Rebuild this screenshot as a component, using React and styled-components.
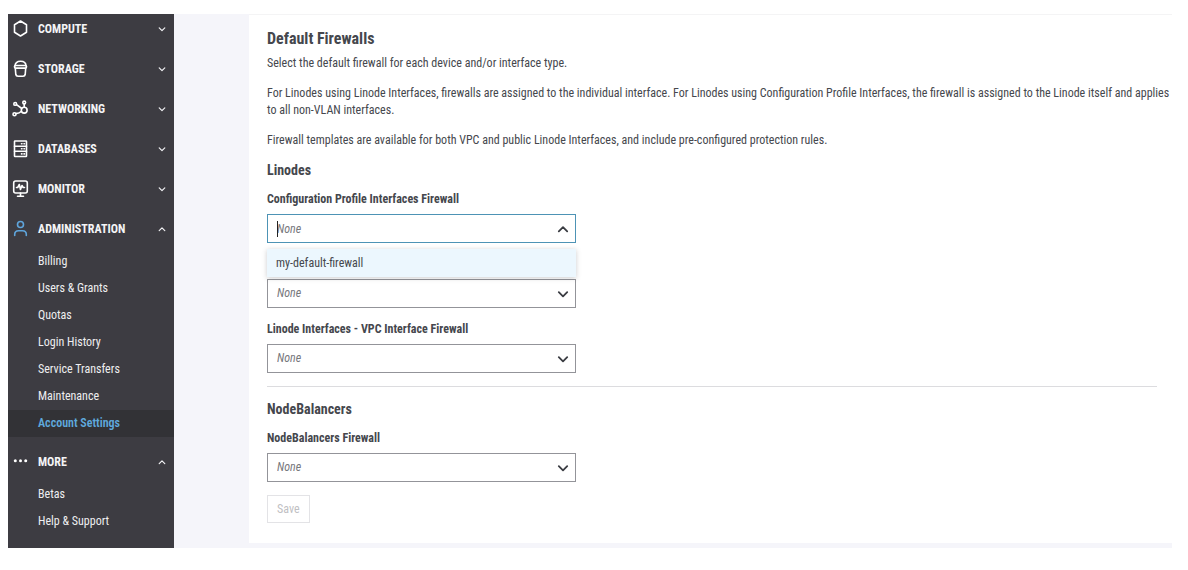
import React, { useState } from 'react';
import styled, { createGlobalStyle, css } from 'styled-components';

const GlobalStyle = createGlobalStyle`
  *, *::before, *::after { box-sizing: border-box; }
  body {
    margin: 0;
    background: #fff;
    color: #45474d;
    font: 12px/17px "Roboto Condensed", Roboto, sans-serif;
  }
  button, input, select { font: inherit; }
`;

const Page = styled.div`
  display: flex;
  padding: 14px 16px 22px 8px;
`;

const Sidebar = styled.nav`
  display: flex;
  flex-direction: column;
  gap: 10px;
  flex: 0 0 166px;
  padding-bottom: 12px;
  background: #3d3c42;
  color: #fff;
`;

const GroupHeader = styled.button`
  display: flex;
  align-items: center;
  gap: 9px;
  width: 100%;
  height: 30px;
  padding: 0 8px 0 4px;
  border: 0;
  background: none;
  color: #f4f4f6;
  font-weight: 700;
  text-align: left;
  text-transform: uppercase;
  cursor: pointer;
`;

const GroupIcon = styled.svg`
  flex: none;
  width: 17px;
  height: 18px;
  fill: none;
  stroke: ${(p) => (p.$active ? '#5fa5dc' : '#fff')};
  stroke-width: 1.6;
  stroke-linecap: round;
  stroke-linejoin: round;
`;

const GroupName = styled.span`
  flex: 1;
`;

const ChevronSvg = styled.svg`
  flex: none;
  width: ${(p) => p.$size}px;
  height: ${(p) => p.$size}px;
  fill: none;
  stroke: currentColor;
  stroke-width: 1.5;
  stroke-linecap: round;
  stroke-linejoin: round;
`;

const LinkList = styled.ul`
  margin: 4px 0 0;
  padding: 0;
  list-style: none;
`;

const NavLink = styled.a`
  display: block;
  padding-left: 30px;
  line-height: 27px;
  color: #eeeef0;
  text-decoration: none;
  ${(p) =>
    p.$current &&
    css`
      background: #323236;
      color: #5fa9dd;
      font-weight: 600;
    `}
`;

const Main = styled.main`
  flex: 1;
  min-width: 0;
  padding: 0 0 5px 75px;
  background: #f5f5fa;
`;

const Paper = styled.form`
  padding: 14px 15px 20px 18px;
  border-top: 1px solid #f4f4f5;
  background: #fff;
`;

const Title = styled.h1`
  margin: 0 0 6px;
  font-size: 16px;
  line-height: 20px;
`;

const Intro = styled.div`
  display: flex;
  flex-direction: column;
  gap: 13px;
  margin-bottom: 11px;

  @media (min-width: 1180px) {
    white-space: nowrap;
  }
`;

const Paragraph = styled.p`
  margin: 0;
`;

const SectionTitle = styled.h2`
  margin: 0 0 10px;
  font-size: 14px;
  line-height: 20px;
`;

const FieldStack = styled.div`
  display: flex;
  flex-direction: column;
  gap: 12px;
  max-width: 309px;
`;

const Field = styled.div`
  position: relative;
`;

const FieldLabel = styled.label`
  display: block;
  margin-bottom: 6px;
  line-height: 18px;
  font-weight: 700;
  visibility: ${(p) => (p.$covered ? 'hidden' : 'visible')};
`;

const Control = styled.div`
  position: relative;
  display: flex;
  align-items: center;
  height: 29px;
  border: 1px solid ${(p) => (p.$open ? '#4d93b5' : '#939499')};
  color: #3a3c42;

  & > svg {
    position: absolute;
    right: 6px;
    pointer-events: none;
  }
`;

const controlText = css`
  width: 100%;
  height: 100%;
  padding: 0 24px 0 9px;
  border: 0;
  outline: 0;
  appearance: none;
  background: transparent;
  color: #77787d;
  font-style: italic;
`;

const Select = styled.select`
  ${controlText}
`;

const ComboInput = styled.input`
  ${controlText}
  caret-color: transparent;

  &::placeholder {
    color: #77787d;
    opacity: 1;
  }
`;

const TextCursor = styled.span`
  position: absolute;
  left: 9px;
  width: 1px;
  height: 16px;
  background: #222;
`;

const Menu = styled.ul`
  position: absolute;
  z-index: 1;
  top: 100%;
  left: 0;
  right: 0;
  margin: 6px 0 0;
  padding: 0;
  list-style: none;
  background: #fff;
  box-shadow: 0 1px 5px rgba(50, 50, 60, 0.25);
`;

const MenuItem = styled.li`
  padding: 0 9px;
  line-height: 28px;
  background: #ecf7fe;
  cursor: pointer;
`;

const Divider = styled.hr`
  height: 1px;
  margin: 13px 0 12px;
  border: 0;
  background: #dcdcdf;
`;

const SaveButton = styled.button`
  height: 28px;
  margin-top: 13px;
  padding: 0 9px;
  border: 1px solid #e3e3e6;
  background: #fff;
  color: #bfc0c3;
`;

function Chevron({ up, size }) {
  return (
    <ChevronSvg $size={size} viewBox="0 0 10 10" aria-hidden="true">
      <path d={up ? 'M1.500 7L5 3.500L8.500 7' : 'M1.500 3.500L5 7L8.500 3.500'} />
    </ChevronSvg>
  );
}

const icons = {
  compute: <path d="M8.500 1L14.500 4.700V12.300L8.500 16L2.500 12.300V4.700Z" />,
  storage: (
    <>
      <path d="M3 6C3 3 5 1.300 8.500 1.300S14 3 14 6" />
      <rect x="2.500" y="5.500" width="12" height="2.600" rx="1" />
      <path d="M3.300 8.300L3.800 14.500Q4.100 16.200 6 16.200H11Q12.900 16.200 13.200 14.500L13.700 8.300" />
    </>
  ),
  networking: (
    <>
      <circle cx="12.200" cy="10.200" r="2.900" />
      <circle cx="3.200" cy="3.900" r="1.400" />
      <circle cx="12.200" cy="2.500" r="1.400" />
      <circle cx="2.500" cy="14.200" r="1.500" />
      <path d="M4.500 4.700L9.800 8.500M12.200 4V7.200M4 13.600Q7.500 13.500 9.500 11.300" />
    </>
  ),
  databases: (
    <>
      <rect x="2.500" y="1" width="12" height="15.500" rx="0.500" />
      <path d="M2.500 6.200H14.500M2.500 11.300H14.500" />
      <path d="M9.500 3.700H10M12 3.700H12.500M9.500 8.800H10M12 8.800H12.500M9.500 13.900H10M12 13.900H12.500" />
    </>
  ),
  monitor: (
    <>
      <rect x="1.700" y="1" width="13.600" height="12" rx="2" />
      <path d="M4.500 7.500H5.700L7.300 4.500L8.500 9.500L10 5.500L11.200 7.500H12.500M8.500 13V16M5.500 16.200H11.500" />
    </>
  ),
  administration: (
    <>
      <circle cx="8.500" cy="4.500" r="3" />
      <path d="M2.700 15.500V14.500Q2.700 10.800 6.500 10.800H10.500Q14.300 10.800 14.300 14.500V15.500" />
    </>
  ),
  more: (
    <g fill="#fff" stroke="none">
      <circle cx="3.300" cy="7.700" r="1.500" />
      <circle cx="8.500" cy="7.700" r="1.500" />
      <circle cx="13.700" cy="7.700" r="1.500" />
    </g>
  ),
};

const groups = [
  { id: 'compute', name: 'Compute' },
  { id: 'storage', name: 'Storage' },
  { id: 'networking', name: 'Networking' },
  { id: 'databases', name: 'Databases' },
  { id: 'monitor', name: 'Monitor' },
  {
    id: 'administration',
    name: 'Administration',
    active: true,
    links: [
      'Billing',
      'Users & Grants',
      'Quotas',
      'Login History',
      'Service Transfers',
      'Maintenance',
      'Account Settings',
    ],
  },
  { id: 'more', name: 'More', links: ['Betas', 'Help & Support'] },
];

function NavGroup({ group }) {
  const [open, setOpen] = useState(Boolean(group.links));
  return (
    <div>
      <GroupHeader type="button" aria-expanded={open} onClick={() => setOpen(!open)}>
        <GroupIcon $active={group.active} viewBox="0 0 17 18" aria-hidden="true">
          {icons[group.id]}
        </GroupIcon>
        <GroupName>{group.name}</GroupName>
        <Chevron up={open} size={8} />
      </GroupHeader>
      {open && group.links && (
        <LinkList>
          {group.links.map((link) => (
            <li key={link}>
              <NavLink href="#" $current={link === 'Account Settings'}>
                {link}
              </NavLink>
            </li>
          ))}
        </LinkList>
      )}
    </div>
  );
}

function SelectField({ id, label, covered }) {
  return (
    <Field>
      <FieldLabel htmlFor={id} $covered={covered}>
        {label}
      </FieldLabel>
      <Control>
        <Select id={id} defaultValue="">
          <option value="">None</option>
          <option value="my-default-firewall">my-default-firewall</option>
        </Select>
        <Chevron size={12} />
      </Control>
    </Field>
  );
}

function ComboField({ id, label, open, setOpen }) {
  const [value, setValue] = useState('');
  const choose = () => {
    setValue('my-default-firewall');
    setOpen(false);
  };
  return (
    <Field>
      <FieldLabel htmlFor={id}>{label}</FieldLabel>
      <Control $open={open}>
        <ComboInput
          id={id}
          type="text"
          role="combobox"
          aria-expanded={open}
          aria-controls={`${id}-menu`}
          placeholder="None"
          autoComplete="off"
          value={value}
          onFocus={() => setOpen(true)}
          onChange={(e) => setValue(e.target.value)}
        />
        {open && !value && <TextCursor />}
        <Chevron up={open} size={12} />
      </Control>
      {open && (
        <Menu id={`${id}-menu`} role="listbox">
          <MenuItem role="option" aria-selected="false" onClick={choose}>
            my-default-firewall
          </MenuItem>
        </Menu>
      )}
    </Field>
  );
}

export default function App() {
  const [menuOpen, setMenuOpen] = useState(true);
  return (
    <>
      <GlobalStyle />
      <Page>
        <Sidebar aria-label="Main">
          {groups.map((group) => (
            <NavGroup key={group.id} group={group} />
          ))}
        </Sidebar>
        <Main>
          <Paper onSubmit={(e) => e.preventDefault()}>
            <Title>Default Firewalls</Title>
            <Intro>
              <Paragraph>
                Select the default firewall for each device and/or interface type.
              </Paragraph>
              <Paragraph>
                For Linodes using Linode Interfaces, firewalls are assigned to the individual
                interface. For Linodes using Configuration Profile Interfaces, the firewall is
                assigned to the Linode itself and applies
                <br />
                to all non-VLAN interfaces.
              </Paragraph>
              <Paragraph>
                Firewall templates are available for both VPC and public Linode Interfaces, and
                include pre-configured protection rules.
              </Paragraph>
            </Intro>
            <SectionTitle>Linodes</SectionTitle>
            <FieldStack>
              <ComboField
                id="config-profile"
                label="Configuration Profile Interfaces Firewall"
                open={menuOpen}
                setOpen={setMenuOpen}
              />
              <SelectField
                id="public-interface"
                label="Linode Interfaces - Public Interface Firewall"
                covered={menuOpen}
              />
              <SelectField id="vpc-interface" label="Linode Interfaces - VPC Interface Firewall" />
            </FieldStack>
            <Divider />
            <SectionTitle>NodeBalancers</SectionTitle>
            <FieldStack>
              <SelectField id="nodebalancers" label="NodeBalancers Firewall" />
            </FieldStack>
            <SaveButton type="submit" disabled>
              Save
            </SaveButton>
          </Paper>
        </Main>
      </Page>
    </>
  );
}
